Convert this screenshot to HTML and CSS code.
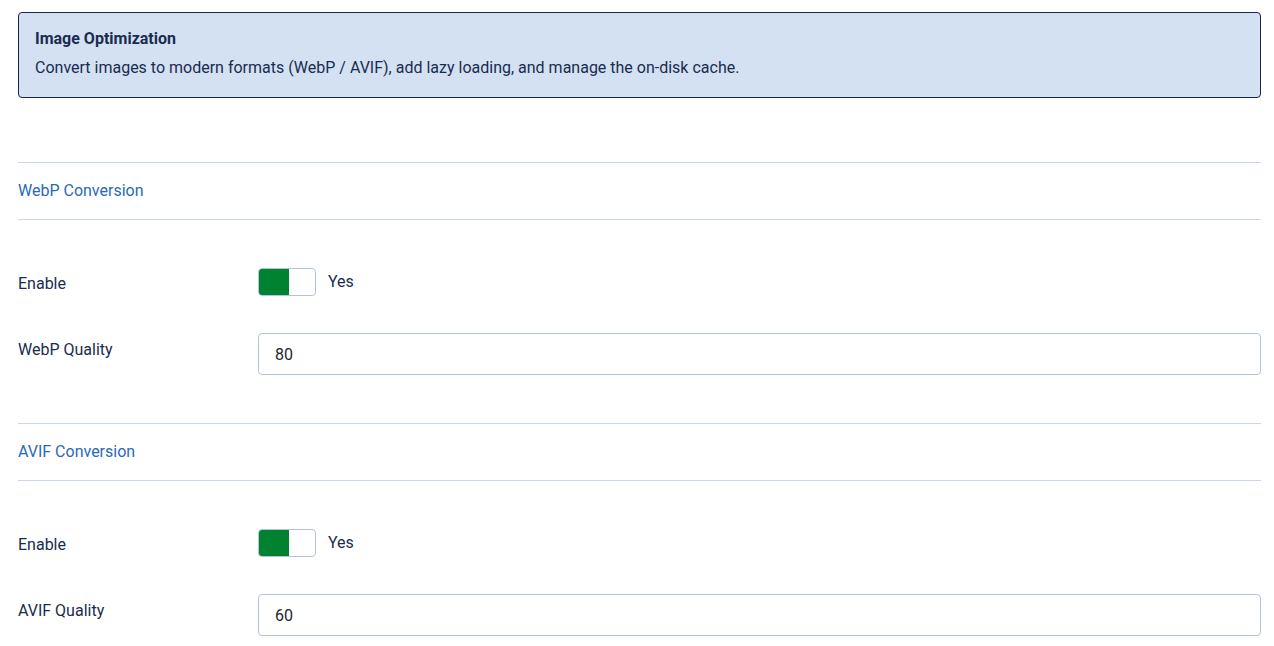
FILE: index.html
```html
<!DOCTYPE html>
<html lang="en">
<head>
    <meta charset="UTF-8">
    <meta name="viewport" content="width=device-width, initial-scale=1.0">
    <title>Image Optimization</title>
    <link rel="stylesheet" href="styles.css">
</head>
<body>
    <div class="alert">
        <h4 class="alert-heading">Image Optimization</h4>
        <p>Convert images to modern formats (WebP / AVIF), add lazy loading, and manage the on-disk cache.</p>
    </div>

    <fieldset class="options">
        <legend class="options-legend">WebP Conversion</legend>
        <div class="fields">
            <div class="control-group switch-group">
                <label class="control-label">Enable</label>
                <div class="controls">
                    <span class="switcher on"><span class="switcher-knob"></span></span>
                    <span class="switcher-text">Yes</span>
                </div>
            </div>
            <div class="control-group">
                <label class="control-label" for="webpQuality">WebP Quality</label>
                <div class="controls">
                    <input type="text" id="webpQuality" class="form-control" value="80">
                </div>
            </div>
        </div>
    </fieldset>

    <fieldset class="options">
        <legend class="options-legend">AVIF Conversion</legend>
        <div class="fields">
            <div class="control-group switch-group">
                <label class="control-label">Enable</label>
                <div class="controls">
                    <span class="switcher on"><span class="switcher-knob"></span></span>
                    <span class="switcher-text">Yes</span>
                </div>
            </div>
            <div class="control-group">
                <label class="control-label" for="avifQuality">AVIF Quality</label>
                <div class="controls">
                    <input type="text" id="avifQuality" class="form-control" value="60">
                </div>
            </div>
        </div>
    </fieldset>
</body>
</html>
```

FILE: styles.css
```css
body {
    font-family: Roboto, 'Noto Sans', sans-serif;
    font-size: 16px;
    line-height: 24px;
    color: #1a2c4e;
    margin: 0;
    padding: 12px 13px 0 18px;
    background-color: #fff;
}
.alert {
    background-color: #d3e1f3;
    border: 1px solid #14284a;
    border-radius: 4px;
    padding: 14px 16px 17px;
    margin-bottom: 64px;
}
.alert-heading {
    margin: 0 0 5px;
    font-size: 16px;
    line-height: 24px;
    font-weight: 700;
}
.alert p {
    margin: 0;
}
.options {
    border: 0;
    margin: 0;
    padding: 0;
    min-width: 0;
}
.options-legend {
    display: block;
    width: 100%;
    float: left;
    box-sizing: border-box;
    padding: 16px 0;
    line-height: 24px;
    color: #2a69b8;
    border-top: 1px solid #c8d6ec;
    border-bottom: 1px solid #c8d6ec;
}
.fields {
    clear: both;
    padding: 48px 0 48px;
}
.control-group {
    display: flex;
    align-items: flex-start;
}
.switch-group {
    margin-bottom: 37px;
}
.control-label {
    width: 240px;
    flex-shrink: 0;
    padding-top: 5px;
}
.switch-group .control-label {
    padding-top: 4px;
}
.controls {
    flex-grow: 1;
    display: flex;
    align-items: center;
}
.switcher {
    display: inline-block;
    width: 58px;
    height: 28px;
    box-sizing: border-box;
    border: 1px solid #b2c3de;
    border-radius: 4px;
    background-color: #fff;
    overflow: hidden;
}
.switcher-knob {
    display: block;
    width: 30px;
    height: 100%;
    background-color: #008230;
}
.switcher-text {
    margin-left: 12px;
    margin-top: -1px;
}
.form-control {
    width: 100%;
    height: 42px;
    box-sizing: border-box;
    border: 1px solid #b2c3de;
    border-radius: 4px;
    padding: 0 16px;
    font-family: Roboto, 'Noto Sans', sans-serif;
    font-size: 16px;
    color: #22262a;
    background-color: #fff;
}
```
